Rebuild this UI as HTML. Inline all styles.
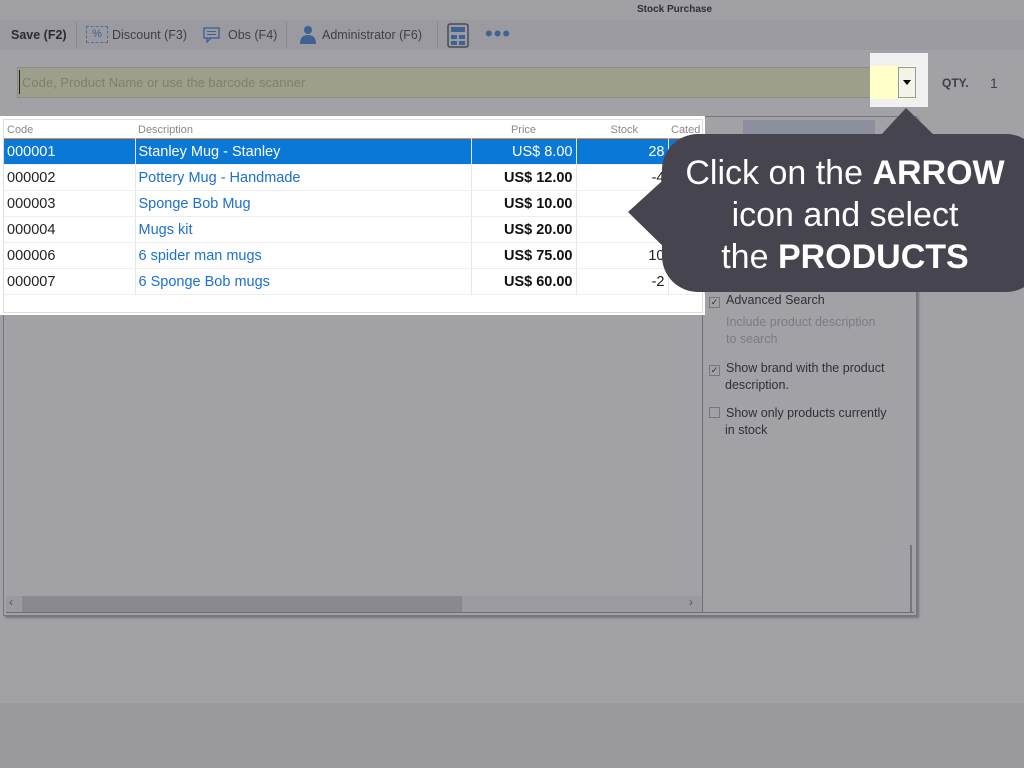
<!DOCTYPE html><html><head><style>
body{margin:0;width:1024px;height:768px;background:#a2a1a6;font-family:"Liberation Sans",sans-serif;position:relative;overflow:hidden}
.a{position:absolute}
.tb{font-size:12.5px;color:#3f3f46}
td{padding:0 3px;height:25px;border-right:1px solid #e6e6e6;border-bottom:1px solid #eee;font-size:14.5px;white-space:nowrap}
.d{color:#1a6fd0}.p{text-align:right;font-weight:bold;color:#111}.s{text-align:right}
.cb{display:inline-block;width:9px;height:9px;border:1px solid #77767c;font-size:9px;line-height:9px;text-align:center;margin-right:6px;vertical-align:-1px}
</style></head><body>
<div class="a" style="left:0;top:0;width:1024px;height:20px;background:#a09fa4;font-size:10px;font-weight:bold;color:#2f2f35;text-align:center;line-height:20px;padding-left:325px;box-sizing:border-box">Stock Purchase</div>
<div class="a" style="left:0;top:20px;width:1024px;height:30px;background:#9b9aa0"></div>
<div class="a tb" style="left:11px;top:28px;font-weight:bold;color:#2b2b30">Save (F2)</div>
<div class="a" style="left:76px;top:22px;width:1px;height:26px;background:#8a8990"></div>
<div class="a" style="left:86px;top:26px;width:20px;height:15px;border:1px dashed #4f6f99;font-size:11px;color:#3f5f8f;text-align:center;line-height:15px">%</div>
<div class="a tb" style="left:112px;top:28px">Discount (F3)</div>
<svg class="a" style="left:203px;top:27px" width="18" height="16"><rect x="1" y="1" width="15" height="10" fill="none" stroke="#3f5f8f" stroke-width="1.3"/><path d="M4 11 L4 15 L8 11" fill="none" stroke="#3f5f8f" stroke-width="1.3"/><path d="M4 4.5H13M4 7.5H13" stroke="#3f5f8f"/></svg>
<div class="a tb" style="left:228px;top:28px">Obs (F4)</div>
<div class="a" style="left:286px;top:22px;width:1px;height:26px;background:#8a8990"></div>
<svg class="a" style="left:299px;top:25px" width="18" height="20"><circle cx="9" cy="5" r="4" fill="#3f6294"/><path d="M1 19 Q1 10 9 10 Q17 10 17 19Z" fill="#3f6294"/></svg>
<div class="a tb" style="left:322px;top:28px">Administrator (F6)</div>
<div class="a" style="left:437px;top:22px;width:1px;height:26px;background:#8a8990"></div>
<svg class="a" style="left:447px;top:23px" width="22" height="25"><rect x="1" y="1" width="20" height="23" rx="2" fill="none" stroke="#4a4a52" stroke-width="1.5"/><rect x="4" y="12" width="6" height="4" fill="#3f6294"/><rect x="12" y="12" width="6" height="4" fill="#3f6294"/><rect x="4" y="18" width="6" height="4" fill="#3f6294"/><rect x="12" y="18" width="6" height="4" fill="#3f6294"/><rect x="4" y="4" width="14" height="5" fill="#3f6294"/></svg>
<div class="a" style="left:485px;top:21px;font-size:22px;color:#3f6294;letter-spacing:1px">•••</div>
<div class="a" style="left:17px;top:67px;width:860px;height:31px;background:#9d9f8b;border:1px solid #8c8c86;box-sizing:border-box"></div>
<div class="a" style="left:19px;top:70px;width:1px;height:24px;background:#222"></div>
<div class="a" style="left:22px;top:75px;font-size:13px;color:#7d7f72">Code, Product Name or use the barcode scanner</div>
<div class="a" style="left:870px;top:53px;width:58px;height:54px;background:#f0f0f0"></div>
<div class="a" style="left:870px;top:66px;width:46px;height:33px;background:#ffffc8"></div>
<div class="a" style="left:898px;top:67px;width:18px;height:31px;background:#f4f4e6;border:1px solid #999;box-sizing:border-box"></div>
<div class="a" style="left:903px;top:80px;border-left:4px solid transparent;border-right:4px solid transparent;border-top:5px solid #000"></div>
<div class="a" style="left:942px;top:76px;font-size:12px;color:#3f3f46;font-weight:bold">QTY.</div>
<div class="a" style="left:990px;top:75px;font-size:14px;color:#3f3f46">1</div>
<div class="a" style="left:3px;top:116px;width:914px;height:500px;border:1px solid #77767c;box-sizing:border-box;box-shadow:2px 2px 2px #77767c"></div>
<div class="a" style="left:702px;top:120px;width:1px;height:493px;background:#6e6d74"></div>
<div class="a" style="left:743px;top:120px;width:132px;height:14px;background:#8e8f9c"></div>
<div class="a" style="left:910px;top:545px;width:2px;height:68px;background:#77767c"></div>
<div class="a" style="left:6px;top:596px;width:696px;height:16px;background:#9b9aa0"></div>
<div class="a" style="left:22px;top:596px;width:440px;height:16px;background:#8a898f"></div>
<div class="a" style="left:9px;top:595px;font-size:12px;color:#555">‹</div>
<div class="a" style="left:689px;top:595px;font-size:12px;color:#555">›</div>
<div class="a" style="left:6px;top:612px;width:908px;height:1px;background:#6e6d74"></div>
<div class="a" style="left:0;top:703px;width:1024px;height:65px;background:#9a999e"></div>
<div class="a" style="left:709px;top:292px;font-size:12.5px;color:#2f2f36;line-height:17px">
<div><span class="cb">✓</span>Advanced Search</div>
<div style="color:#7d7c83;padding-left:17px;margin-top:5px">Include product description<br>to search</div>
<div style="margin-top:12px"><span class="cb">✓</span>Show brand with the product<br><span style="padding-left:16px">description.</span></div>
<div style="margin-top:11px"><span class="cb"></span>Show only products currently<br><span style="padding-left:16px">in stock</span></div></div>
<div class="a" style="left:0;top:116px;width:705px;height:199px;background:#fff"></div>
<div class="a" style="left:3px;top:119px;width:700px;height:194px;border:1px solid #ddd;box-sizing:border-box"></div>
<table class="a" style="left:4px;top:121px;border-collapse:collapse;width:700px;table-layout:fixed;color:#222">
<colgroup><col style="width:131px"><col style="width:336px"><col style="width:105px"><col style="width:92px"><col style="width:36px"></colgroup>
<tr style="height:17px;font-size:11px;color:#888"><td style="height:17px;font-size:11px;border:0">Code</td><td style="height:17px;font-size:11px;border:0">Description</td><td style="height:17px;font-size:11px;border:0;text-align:right;padding-right:40px">Price</td><td style="height:17px;font-size:11px;border:0;text-align:right;padding-right:30px">Stock</td><td style="height:17px;font-size:11px;border:0">Cated</td></tr>
<tr style="background:#0a78d7;color:#fff;border-top:1px solid #e98a3a;border-bottom:1px solid #e98a3a"><td>000001</td><td style="color:#fff">Stanley Mug - Stanley</td><td class="p" style="color:#fff;font-weight:normal">US$ 8.00</td><td class="s">28</td><td></td></tr>
<tr><td>000002</td><td class="d">Pottery Mug - Handmade</td><td class="p">US$ 12.00</td><td class="s">-4</td><td></td></tr>
<tr><td>000003</td><td class="d">Sponge Bob Mug</td><td class="p">US$ 10.00</td><td></td><td></td></tr>
<tr><td>000004</td><td class="d">Mugs kit</td><td class="p">US$ 20.00</td><td></td><td></td></tr>
<tr><td>000006</td><td class="d">6 spider man mugs</td><td class="p">US$ 75.00</td><td class="s">10</td><td></td></tr>
<tr><td>000007</td><td class="d">6 Sponge Bob mugs</td><td class="p">US$ 60.00</td><td class="s">-2</td><td></td></tr>
</table>
<svg class="a" style="left:0;top:0" width="1024" height="768"><path d="M628 212 L672 172 L672 255Z M880 136 L906 108 L935 136Z" fill="#45444f"/><rect x="662" y="134" width="380" height="158" rx="36" fill="#45444f"/></svg>
<div class="a" style="left:664px;top:152px;width:362px;text-align:center;color:#fff;font-size:34px;line-height:42px">Click on the <b>ARROW</b><br>icon and select<br>the <b>PRODUCTS</b></div>
</body></html>
